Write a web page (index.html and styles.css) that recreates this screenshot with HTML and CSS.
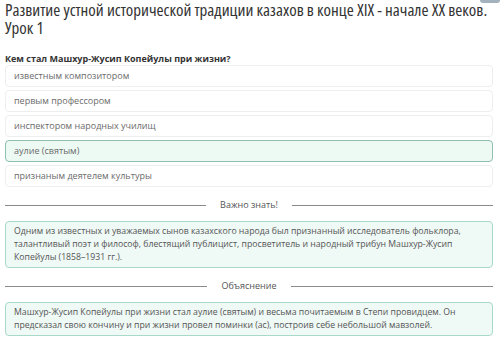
FILE: index.html
```html
<!DOCTYPE html>
<html>
<head>
<meta charset="utf-8">
<link rel="stylesheet" href="styles.css">
</head>
<body>
<div class="corner-btn"></div>

<h1 class="lesson-title">Развитие устной исторической традиции казахов в конце XIX - начале XX веков. Урок&nbsp;1</h1>

<div class="question">Кем стал Машхур-Жусип Копейулы при жизни?</div>

<div class="answers">
    <div class="answer">известным композитором</div>
    <div class="answer">первым профессором</div>
    <div class="answer">инспектором народных училищ</div>
    <div class="answer correct">аулие (святым)</div>
    <div class="answer">признаным деятелем культуры</div>
</div>

<div class="divider"><span>Важно знать!</span></div>
<div class="note">Одним из известных и уважаемых сынов казахского народа был признанный исследователь фольклора, талантливый поэт и философ, блестящий публицист, просветитель и народный трибун Машхур-Жусип Копейулы (1858–1931 гг.).</div>

<div class="divider"><span>Объяснение</span></div>
<div class="note">Машхур-Жусип Копейулы при жизни стал аулие (святым) и весьма почитаемым в Степи провидцем. Он предсказал свою кончину и при жизни провел поминки (ас), построив себе небольшой мавзолей.</div>
</body>
</html>
```

FILE: styles.css
```css
body {
    margin: 0;
    padding: 0 7px 0 5px;
    background-color: #fff;
    font-family: "Open Sans", "Noto Sans", sans-serif;
    color: #333;
    position: relative;
}

.corner-btn {
    position: absolute;
    top: -10px;
    right: 0px;
    width: 20px;
    height: 13px;
    background-color: #a3b1bd;
    border-radius: 3px;
}

.lesson-title {
    margin: 0;
    padding-top: 1px;
    font-size: 17px;
    font-stretch: 82%;
    font-weight: normal;
    line-height: 18px;
    color: #333;
}

.question {
    margin-top: 16px;
    font-size: 9px;
    font-weight: bold;
    line-height: 12px;
    color: #333;
}

.answer {
    box-sizing: border-box;
    height: 22px;
    margin-bottom: 3px;
    padding: 0 8px;
    font-size: 9px;
    line-height: 20px;
    color: #6b6b6b;
    border: 1px solid #eeeeee;
    border-radius: 4px;
    background-color: #fff;
}

.answer:last-child {
    margin-bottom: 0;
}

.answer.correct {
    background-color: #edf9f3;
    border-color: #90bfb0;
}

.divider {
    display: flex;
    align-items: center;
    gap: 14px;
    margin-top: 11px;
    font-size: 9px;
    line-height: 14px;
    color: #555;
}

.divider::before,
.divider::after {
    content: "";
    flex: 1;
    border-top: 1px solid #8a8a8a;
}

.note {
    box-sizing: border-box;
    margin-top: 9px;
    padding: 3px 8px;
    font-size: 8.7px;
    line-height: 13px;
    color: #555;
    background-color: #eff9f5;
    border: 1px solid #a9d9c8;
    border-radius: 4px;
}
```
